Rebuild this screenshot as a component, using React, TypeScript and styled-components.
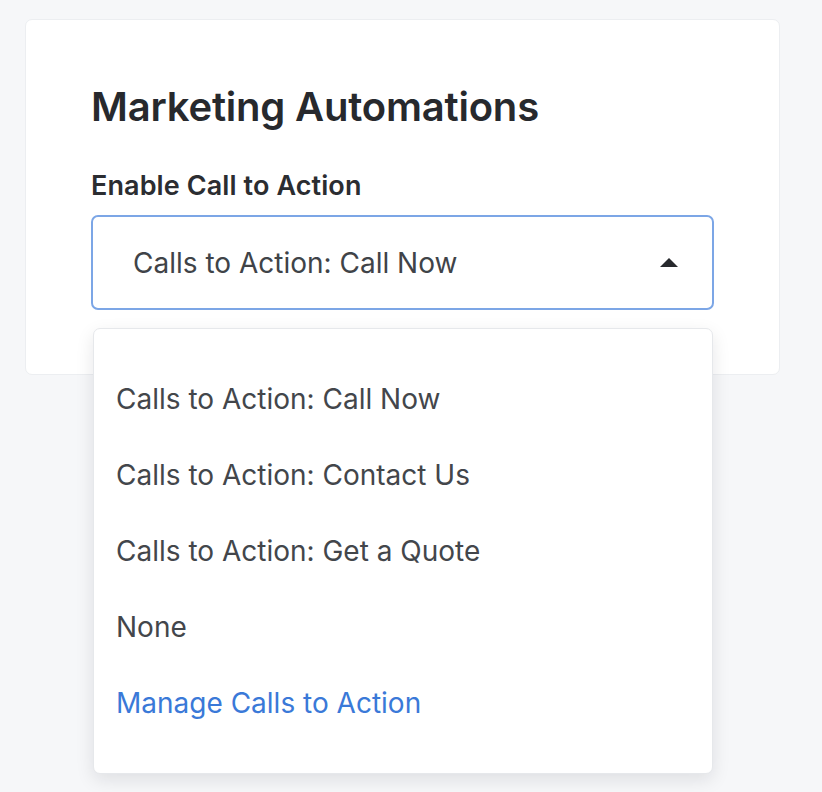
import React, { FC, useState } from "react";
import styled, { createGlobalStyle } from "styled-components";

const GlobalStyle = createGlobalStyle`
  html, body {
    margin: 0;
    padding: 0;
    background: #f6f7f9;
    font-family: Inter, "Noto Sans", "Liberation Sans", sans-serif;
  }
`;

const Page = styled.div`
  box-sizing: border-box;
  min-height: 100vh;
  padding: 19px 42px 0 25px;
`;

const Card = styled.section`
  box-sizing: border-box;
  width: 755px;
  height: 356px;
  padding: 0 65px;
  background: #ffffff;
  border: 1px solid #eceef1;
  border-radius: 7px;
`;

const Title = styled.h2`
  margin: 0;
  padding-top: 61px;
  font-size: 40px;
  font-weight: 600;
  line-height: 52px;
  color: #27292d;
  letter-spacing: -0.2px;
`;

const Label = styled.div`
  margin-top: 36px;
  font-size: 27px;
  font-weight: 600;
  line-height: 34px;
  color: #2b2d31;
  letter-spacing: 0.1px;
`;

const SelectWrap = styled.div`
  position: relative;
  margin-top: 12px;
`;

const SelectBox = styled.button`
  box-sizing: border-box;
  display: flex;
  align-items: center;
  justify-content: space-between;
  width: 100%;
  height: 95px;
  padding: 0 34px 0 40px;
  background: #ffffff;
  border: 2px solid #7ca6e6;
  border-radius: 7px;
  font-family: inherit;
  font-size: 28px;
  color: #404348;
  cursor: pointer;
  text-align: left;
`;

const Caret = styled.span`
  width: 0;
  height: 0;
  border-left: 9px solid transparent;
  border-right: 9px solid transparent;
  border-bottom: 9px solid #27292d;
`;

const Menu = styled.ul`
  position: absolute;
  top: calc(100% + 18px);
  left: 2px;
  right: 1px;
  box-sizing: border-box;
  margin: 0;
  padding: 32px 0;
  list-style: none;
  background: #ffffff;
  border: 1px solid #e6e8eb;
  border-radius: 7px;
  box-shadow: 0 6px 18px rgba(20, 24, 30, 0.1);
  z-index: 10;
`;

const Option = styled.li<{ link?: boolean }>`
  display: flex;
  align-items: center;
  height: 76px;
  padding: 0 22px;
  font-size: 28px;
  color: ${({ link }) => (link ? "#3a79d8" : "#43464b")};
  cursor: pointer;
`;

const options = [
  "Calls to Action: Call Now",
  "Calls to Action: Contact Us",
  "Calls to Action: Get a Quote",
  "None",
];

const App: FC = () => {
  const [value, setValue] = useState(options[0]);
  const [open, setOpen] = useState(true);

  return (
    <>
      <GlobalStyle />
      <Page>
        <Card>
          <Title>Marketing Automations</Title>
          <Label>Enable Call to Action</Label>
          <SelectWrap>
            <SelectBox onClick={() => setOpen(!open)}>
              <span>{value}</span>
              <Caret />
            </SelectBox>
            {open ? (
              <Menu>
                {options.map((o) => (
                  <Option
                    key={o}
                    onClick={() => {
                      setValue(o);
                      setOpen(false);
                    }}
                  >
                    {o}
                  </Option>
                ))}
                <Option link>Manage Calls to Action</Option>
              </Menu>
            ) : null}
          </SelectWrap>
        </Card>
      </Page>
    </>
  );
};

export default App;
